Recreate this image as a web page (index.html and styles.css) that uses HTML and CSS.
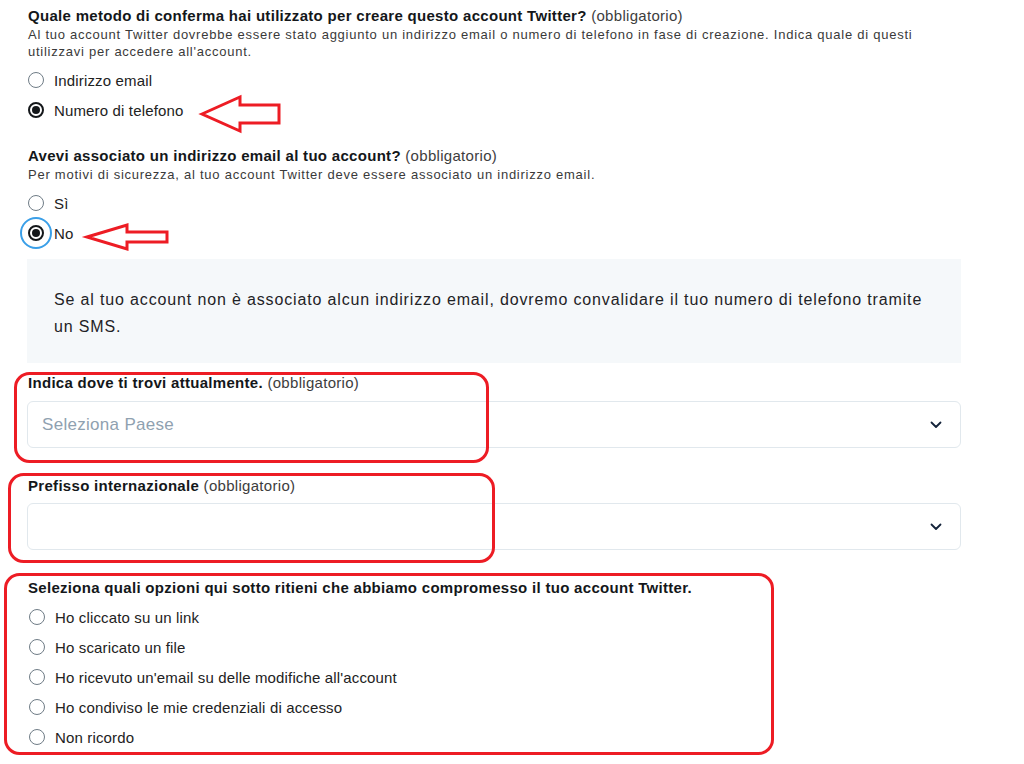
FILE: index.html
```html
<!DOCTYPE html>
<html lang="it">
<head>
<meta charset="utf-8">
<title>Modulo account Twitter</title>
<link rel="stylesheet" href="styles.css">
</head>
<body>
<div class="page">
  <form class="form">
    <fieldset class="group">
      <div class="q-title"><b>Quale metodo di conferma hai utilizzato per creare questo account Twitter?</b> <span class="req">(obbligatorio)</span></div>
      <p class="q-desc">Al tuo account Twitter dovrebbe essere stato aggiunto un indirizzo email o numero di telefono in fase di creazione. Indica quale di questi utilizzavi per accedere all'account.</p>
      <div class="options first">
        <label class="opt"><span class="radio"></span><span>Indirizzo email</span></label>
        <label class="opt"><span class="radio checked"></span><span>Numero di telefono</span></label>
      </div>
    </fieldset>

    <fieldset class="group second">
      <div class="q-title"><b>Avevi associato un indirizzo email al tuo account?</b> <span class="req">(obbligatorio)</span></div>
      <p class="q-desc">Per motivi di sicurezza, al tuo account Twitter deve essere associato un indirizzo email.</p>
      <div class="options first">
        <label class="opt"><span class="radio"></span><span>Sì</span></label>
        <label class="opt"><span class="radio checked focused"></span><span>No</span></label>
      </div>
    </fieldset>

    <div class="info">Se al tuo account non è associato alcun indirizzo email, dovremo convalidare il tuo numero di telefono tramite un SMS.</div>

    <div class="field">
      <div class="f-label"><b>Indica dove ti trovi attualmente.</b> <span class="req">(obbligatorio)</span></div>
      <div class="select"><span class="placeholder">Seleziona Paese</span>
        <svg class="chev" width="12" height="8" viewBox="0 0 12 8"><path d="M1.5 1.5 L6 6 L10.5 1.5" fill="none" stroke="#14233a" stroke-width="1.8" stroke-linecap="round" stroke-linejoin="round"/></svg>
      </div>
    </div>

    <div class="field next">
      <div class="f-label"><b>Prefisso internazionale</b> <span class="req">(obbligatorio)</span></div>
      <div class="select"><span class="placeholder"></span>
        <svg class="chev" width="12" height="8" viewBox="0 0 12 8"><path d="M1.5 1.5 L6 6 L10.5 1.5" fill="none" stroke="#14233a" stroke-width="1.8" stroke-linecap="round" stroke-linejoin="round"/></svg>
      </div>
    </div>

    <div class="field next">
      <div class="f-label"><b>Seleziona quali opzioni qui sotto ritieni che abbiamo compromesso il tuo account Twitter.</b></div>
      <div class="options list">
        <label class="opt"><span class="radio"></span><span>Ho cliccato su un link</span></label>
        <label class="opt"><span class="radio"></span><span>Ho scaricato un file</span></label>
        <label class="opt"><span class="radio"></span><span>Ho ricevuto un'email su delle modifiche all'account</span></label>
        <label class="opt"><span class="radio"></span><span>Ho condiviso le mie credenziali di accesso</span></label>
        <label class="opt"><span class="radio"></span><span>Non ricordo</span></label>
      </div>
    </div>
  </form>

  <!-- red annotations drawn over the screenshot -->
  <svg class="annot" width="1024" height="764" viewBox="0 0 1024 764">
    <g fill="none" stroke="#ed1c24" stroke-width="3" stroke-linejoin="miter">
      <polygon points="202,114 240,97 240,105 279,105 279,123 240,123 240,131"/>
      <polygon points="87,237 127,225 127,232 167,232 167,242 127,242 127,249"/>
      <rect x="15.5" y="373.5" width="472" height="88" rx="14"/>
      <rect x="9.5" y="474.5" width="484" height="87" rx="14"/>
      <rect x="5.5" y="574.5" width="767" height="179" rx="14"/>
    </g>
  </svg>
</div>
</body>
</html>
```

FILE: styles.css
```css
html, body {
  margin: 0;
  padding: 0;
  background: #ffffff;
}
body {
  font-family: "Liberation Sans", Arial, sans-serif;
  color: #14171a;
}
.page {
  position: relative;
  width: 1024px;
  height: 764px;
  overflow: hidden;
}
.form {
  width: 934px;
  margin-left: 27px;
  padding-top: 6px;
  display: flex;
  flex-direction: column;
}
.group {
  border: 0;
  margin: 0;
  padding: 0 0 0 1px;
}
.group.second {
  margin-top: 26px;
}
.q-title, .f-label {
  font-size: 15px;
  line-height: 20px;
  color: #14171a;
  letter-spacing: 0.3px;
}
.q-title b, .f-label b {
  font-weight: 700;
}
.req {
  color: #3d3d3d;
  font-weight: 400;
}
.q-desc {
  margin: 0;
  font-size: 13px;
  line-height: 17px;
  color: #3a3a3a;
  letter-spacing: 0.75px;
}
.options {
  display: flex;
  flex-direction: column;
  gap: 10px;
}
.options.first {
  margin-top: 10px;
}
.options.list {
  margin-top: 9px;
  padding-left: 1px;
}
.opt {
  display: flex;
  align-items: center;
  gap: 10px;
  height: 20px;
  font-size: 15px;
  color: #222;
  letter-spacing: 0.15px;
}
.radio {
  position: relative;
  box-sizing: border-box;
  width: 16px;
  height: 16px;
  border-radius: 50%;
  border: 1px solid #6f7c86;
  background: #fff;
  flex: none;
}
.radio.checked {
  border: 2px solid #14171a;
  background: #fff;
}
.radio.checked::after {
  content: "";
  position: absolute;
  left: 2px;
  top: 2px;
  width: 8px;
  height: 8px;
  border-radius: 50%;
  background: #14171a;
}
.radio.focused::before {
  content: "";
  position: absolute;
  left: -10px;
  top: -10px;
  width: 32px;
  height: 32px;
  box-sizing: border-box;
  border-radius: 50%;
  border: 2px solid #3a9fe8;
}
.info {
  margin-top: 16px;
  background: #f5f8fa;
  padding: 27px 28px 23px 27px;
  font-size: 16px;
  line-height: 27px;
  color: #1f2326;
  letter-spacing: 0.85px;
}
.field {
  margin-top: 10px;
  padding-left: 1px;
}
.field.next {
  margin-top: 28px;
}
.select {
  margin-top: 8px;
  margin-left: -1px;
  box-sizing: border-box;
  height: 47px;
  border: 1px solid #e1e8ed;
  border-radius: 6px;
  display: flex;
  align-items: center;
  justify-content: space-between;
  padding: 0 18px 0 14px;
}
.field.next .select {
  margin-top: 7px;
}
.placeholder {
  font-size: 17px;
  color: #8fa1b0;
  letter-spacing: 0.3px;
}
.chev {
  display: block;
}
.annot {
  position: absolute;
  left: 0;
  top: 0;
  pointer-events: none;
}
```
